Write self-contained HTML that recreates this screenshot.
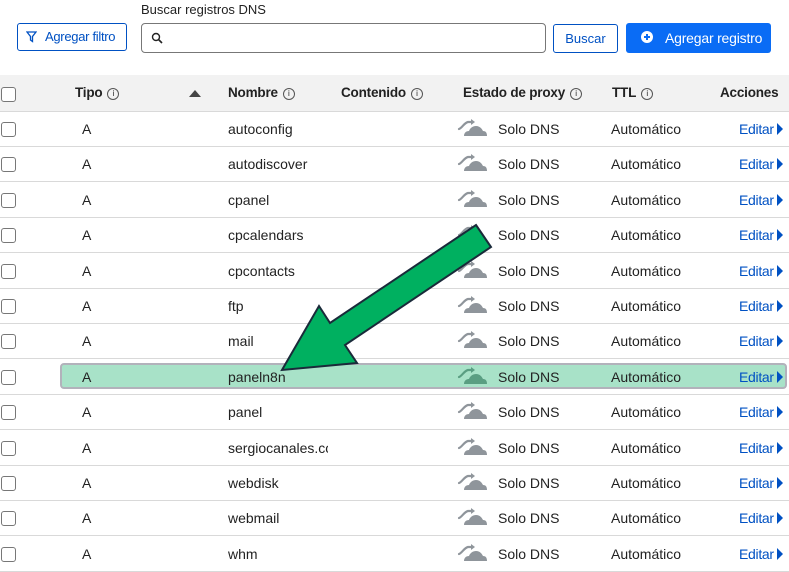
<!DOCTYPE html>
<html><head><meta charset="utf-8"><style>
body{margin:0;width:789px;height:564px;overflow:hidden;background:#fff;font-family:"Liberation Sans",sans-serif;color:#222;position:relative;font-size:14px}
.a{position:absolute;white-space:nowrap}
.cb{position:absolute;left:1px;width:13px;height:13px;border:1px solid #777;border-radius:3px;background:#fff}
.line{position:absolute;left:0;width:789px;height:1px;background:#d9d9d9}
.ed{color:#0051c3;letter-spacing:-0.3px}
.tri{display:inline-block;width:0;height:0;border-top:6px solid transparent;border-bottom:6px solid transparent;border-left:6px solid #0051c3;vertical-align:-1px;margin-left:3px}
.i{display:inline-block;width:10px;height:10px;border:1px solid #555;border-radius:50%;font-size:8px;line-height:10px;text-align:center;font-weight:normal;vertical-align:1px;margin-left:5px}
.hd span{letter-spacing:-0.2px}
</style></head><body>
<div class="a" style="left:141px;top:2px;font-size:13px">Buscar registros DNS</div>
<div class="a" style="left:17px;top:23px;width:110px;height:28px;border:1px solid #0051c3;border-radius:3px;box-sizing:border-box;color:#0051c3;font-size:13px;line-height:26px"><svg style="position:absolute;left:8px;top:7px" width="11" height="12" viewBox="0 0 11 12"><path d="M1 1h9L6.5 5.5v5L4.5 9V5.5z" fill="none" stroke="#0051c3" stroke-width="1.3"/></svg><span style="position:absolute;left:27px;letter-spacing:-0.3px">Agregar filtro</span></div>
<div class="a" style="left:141px;top:23px;width:405px;height:30px;border:1px solid #777;border-radius:4px;box-sizing:border-box"><svg style="position:absolute;left:9px;top:8px" width="12" height="12"><circle cx="5" cy="5" r="3.5" fill="none" stroke="#222" stroke-width="1.4"/><path d="M7.5 7.5L11 11" stroke="#222" stroke-width="1.6"/></svg></div>
<div class="a" style="left:553px;top:24px;width:65px;height:29px;border:1px solid #0051c3;border-radius:3px;box-sizing:border-box;color:#0051c3;font-size:13px;line-height:27px;text-align:center">Buscar</div>
<div class="a" style="left:626px;top:23px;width:145px;height:30px;background:#0a6cf5;border-radius:3px;color:#fff;font-size:14px;line-height:30px"><span style="position:absolute;left:15px;top:8px;width:12px;height:12px;border-radius:50%;background:#fff"></span><span style="position:absolute;left:20px;top:11px;width:2px;height:6px;background:#0a6cf5"></span><span style="position:absolute;left:18px;top:13px;width:6px;height:2px;background:#0a6cf5"></span><span style="position:absolute;left:39px;letter-spacing:-0.2px">Agregar registro</span></div>
<div class="a hd" style="left:0;top:75px;width:789px;height:36px;background:#f2f2f2;border-bottom:1px solid #d9d9d9;font-weight:bold;font-size:13.5px">
<div class="cb" style="top:12px"></div>
<span class="a" style="left:75px;top:10px">Tipo<span class="i">i</span></span>
<span class="a" style="left:189px;top:15px;width:0;height:0;border-left:6px solid transparent;border-right:6px solid transparent;border-bottom:7px solid #444"></span>
<span class="a" style="left:228px;top:10px">Nombre<span class="i">i</span></span>
<span class="a" style="left:341px;top:10px">Contenido<span class="i">i</span></span>
<span class="a" style="left:463px;top:10px">Estado de proxy<span class="i">i</span></span>
<span class="a" style="left:612px;top:10px">TTL<span class="i">i</span></span>
<span class="a" style="left:720px;top:10px">Acciones</span>
</div>
<div class="a" style="left:60px;top:363px;width:727px;height:26px;background:#a8e2c8;border:2px solid #b2b2bb;border-radius:4px;box-sizing:border-box"></div>
<div id="rows"></div>
<script>
var n=["autoconfig","autodiscover","cpanel","cpcalendars","cpcontacts","ftp","mail","paneln8n","panel","sergiocanales.co","webdisk","webmail","whm"];
var h="";
for(var k=0;k<n.length;k++){var t=111+k*35.4;var hl=k==7;
h+='<div class="line" style="top:'+(t+35)+'px"></div>';
h+='<div class="cb" style="top:'+(t+11)+'px"></div>';
h+='<div class="a" style="left:82px;top:'+(t+10)+'px">A</div>';
h+='<div class="a" style="left:228px;top:'+(t+10)+'px;width:100px;overflow:hidden">'+n[k]+'</div>';
var c=hl?'#5a9e82':'#8f959b';
h+='<svg class="a" style="left:457px;top:'+(t+6)+'px" width="32" height="20" viewBox="0 0 32 20"><path d="M2 12c3-1 5-6 9-7l4 0" fill="none" stroke="'+c+'" stroke-width="2.2" stroke-linecap="round"/><path d="M14 2l4 3-4 3z" fill="'+c+'"/><path d="M7 19c0-3 2-5 5-5 1-3 4-5 7-5 4 0 6 3 7 5 3 0 4 2 4 5z" fill="'+c+'"/></svg>';
h+='<div class="a" style="left:498px;top:'+(t+10)+'px">Solo DNS</div>';
h+='<div class="a" style="left:611px;top:'+(t+10)+'px">Automático</div>';
h+='<div class="a ed" style="left:739px;top:'+(t+10)+'px">Editar<span class="tri"></span></div>';}
document.getElementById('rows').innerHTML=h;
</script>
<svg class="a" style="left:0;top:0" width="789" height="564"><polygon points="476,225 491,247 345,345 357,363 282,370 319,306 330,323" fill="#00b060" stroke="#1a2a3a" stroke-width="2" stroke-linejoin="miter"/></svg>
</body></html>
